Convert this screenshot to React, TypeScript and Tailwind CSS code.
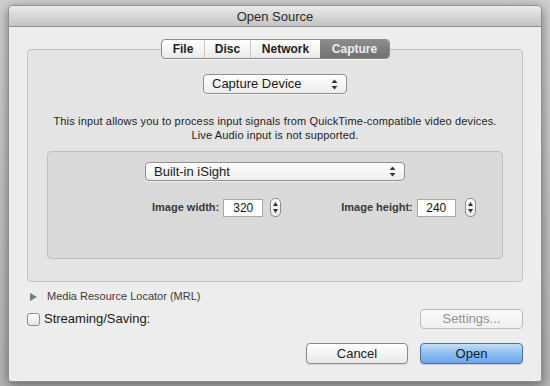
import React from "react";

const font = { fontFamily: '"Liberation Sans", Arial, sans-serif' };

// Up/down arrows used inside popup buttons
function PopupArrows() {
  return (
    <svg width="7" height="11" viewBox="0 0 7 11" className="shrink-0">
      <path d="M3.5 0.5 L6.5 4 L0.5 4 Z" fill="#333" />
      <path d="M3.5 10.5 L6.5 7 L0.5 7 Z" fill="#333" />
    </svg>
  );
}

function Stepper() {
  return (
    <div className="flex h-[19px] w-[11px] flex-col items-center justify-center gap-[3px] rounded-[5px] border border-[#8d8d8d] bg-gradient-to-b from-white to-[#e6e6e6]">
      <svg width="5" height="4" viewBox="0 0 5 4">
        <path d="M2.5 0 L5 4 L0 4 Z" fill="#333" />
      </svg>
      <svg width="5" height="4" viewBox="0 0 5 4">
        <path d="M0 0 L5 0 L2.5 4 Z" fill="#333" />
      </svg>
    </div>
  );
}

function Popup({ label, className }: { label: string; className: string }) {
  return (
    <div
      className={`flex items-center justify-between rounded-[4px] border border-[#8f8f8f] bg-gradient-to-b from-white to-[#ececec] pl-[8px] pr-[8px] text-[13px] text-[#1a1a1a] shadow-[0_1px_0_rgba(255,255,255,0.6)] ${className}`}
    >
      <span>{label}</span>
      <PopupArrows />
    </div>
  );
}

const tabs = [
  { label: "File", w: "w-[42px]" },
  { label: "Disc", w: "w-[46px]" },
  { label: "Network", w: "w-[70px]" },
  { label: "Capture", w: "w-[69px]", active: true },
];

export default function App() {
  return (
    <div
      className="h-[386px] w-[550px] overflow-hidden bg-gradient-to-b from-[#cfcfcf] to-[#b4b4b4] px-[8px] pt-[5px]"
      style={font}
    >
      <div className="flex h-[377px] w-[534px] flex-col overflow-hidden rounded-t-[5px] rounded-b-[3px] border border-[#8f8f8f] bg-[#ededed] shadow-[0_3px_12px_rgba(0,0,0,0.45)]">
        {/* Title bar */}
        <div className="flex h-[21px] shrink-0 items-center justify-center border-b border-[#8e8e8e] bg-gradient-to-b from-[#ebebeb] to-[#c3c3c3] pt-[1px] text-[13px] text-[#2b2b2b]">
          Open Source
        </div>

        <div className="flex flex-col px-[18px] pt-[12px]">
          {/* Segmented tab control */}
          <div className="relative z-10 flex justify-center pl-[1px]">
            <div className="flex h-[20px] overflow-hidden rounded-[4px] border border-[#8b8b8b] bg-gradient-to-b from-white to-[#eaeaea] text-[12px] font-bold shadow-[0_1px_0_rgba(255,255,255,0.7)]">
              {tabs.map((t, i) => (
                <div
                  key={t.label}
                  className={`flex items-center justify-center ${t.w} ${
                    t.active
                      ? "bg-gradient-to-b from-[#8c8c8c] to-[#717171] text-[#ececec]"
                      : "text-[#222]"
                  } ${i > 0 && !t.active ? "border-l border-[#c8c8c8]" : ""}`}
                >
                  {t.label}
                </div>
              ))}
            </div>
          </div>

          {/* Tab box */}
          <div className="-mt-[10px] flex h-[233px] flex-col items-center rounded-[4px] border border-[#c4c4c4] bg-[#e4e4e4] pt-[24px]">
            <Popup label="Capture Device" className="h-[20px] w-[144px]" />

            <p className="mt-[20px] text-center text-[11px] leading-[14px] tracking-[0.15px] text-[#1e1e1e]">
              This input allows you to process input signals from QuickTime-compatible video devices.
              <br />
              Live Audio input is not supported.
            </p>

            <div className="mt-[9px] flex h-[108px] w-[456px] flex-col items-center rounded-[4px] border border-[#bfbfbf] bg-[#d9d9d9] pt-[10px]">
              <Popup label="Built-in iSight" className="h-[19px] w-[260px]" />

              <div className="mt-[17px] flex items-center self-start text-[11px] font-bold text-[#3a3a3a]">
                <span className="ml-[104px]">Image width:</span>
                <div className="ml-[4px] flex h-[18px] w-[40px] items-center justify-center border border-[#a8a8a8] bg-white text-[12px] font-normal text-[#111]">
                  320
                </div>
                <div className="ml-[7px]">
                  <Stepper />
                </div>
                <span className="ml-[60px]">Image height:</span>
                <div className="ml-[4px] flex h-[18px] w-[39px] items-center justify-center border border-[#a8a8a8] bg-white text-[12px] font-normal text-[#111]">
                  240
                </div>
                <div className="ml-[9px]">
                  <Stepper />
                </div>
              </div>
            </div>
          </div>

          {/* Media Resource Locator */}
          <div className="mt-[8px] flex h-[13px] items-center text-[11px] text-[#3c3c3c]">
            <svg width="7" height="8" viewBox="0 0 7 8" className="ml-[3px]">
              <path d="M0 0 L7 4 L0 8 Z" fill="#7a7a7a" />
            </svg>
            <span className="ml-[10px]">Media Resource Locator (MRL)</span>
          </div>

          {/* Streaming / Settings row */}
          <div className="mt-[6px] flex items-center justify-between">
            <div className="flex items-center">
              <div className="h-[13px] w-[13px] rounded-[3px] border border-[#8d8d8d] bg-gradient-to-b from-white to-[#e4e4e4]" />
              <span className="ml-[4px] text-[13px] text-[#1a1a1a]">Streaming/Saving:</span>
            </div>
            <div className="flex h-[20px] w-[103px] items-center justify-center rounded-[4px] border border-[#bdbdbd] bg-gradient-to-b from-[#fafafa] to-[#efefef] text-[13px] text-[#8f8f8f]">
              Settings...
            </div>
          </div>

          {/* Buttons */}
          <div className="mt-[14px] flex justify-end gap-[12px]">
            <div className="flex h-[21px] w-[102px] items-center justify-center rounded-[4px] border border-[#8a8a8a] bg-gradient-to-b from-white to-[#e8e8e8] text-[13px] text-[#1a1a1a] shadow-[0_1px_1px_rgba(0,0,0,0.12)]">
              Cancel
            </div>
            <div className="flex h-[21px] w-[103px] items-center justify-center rounded-[4px] border border-[#4f6fa3] bg-gradient-to-b from-[#c4ddf7] via-[#8dbdf0] to-[#6aa6e8] text-[13px] text-[#0e1a2a] shadow-[0_1px_1px_rgba(0,0,0,0.15)]">
              Open
            </div>
          </div>
        </div>
      </div>
    </div>
  );
}
